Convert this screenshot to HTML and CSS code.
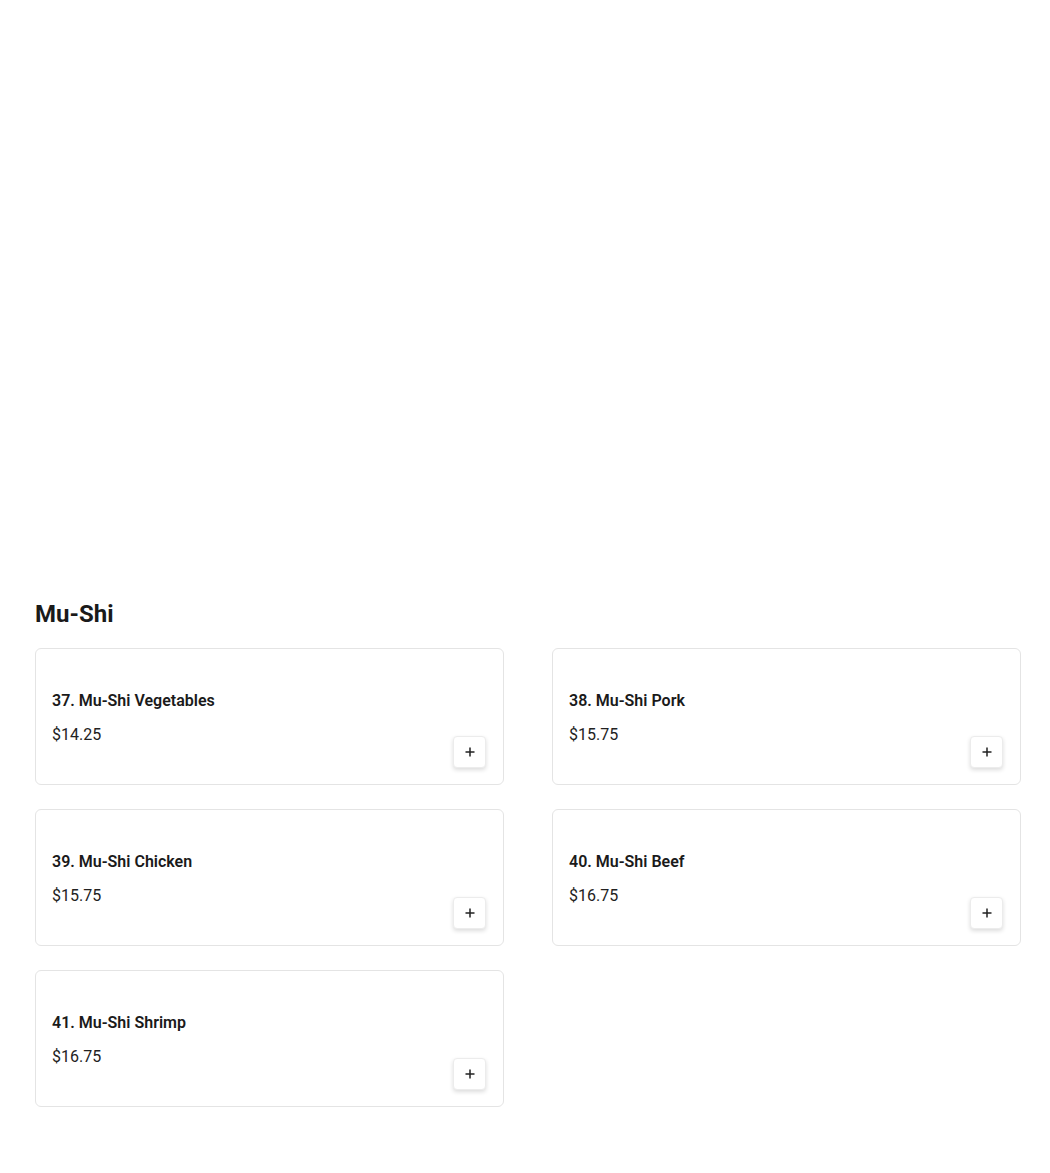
FILE: index.html
```html
<!DOCTYPE html>
<html>
<head>
<meta charset="utf-8">
<link rel="stylesheet" href="styles.css">
</head>
<body>
<main class="page">
  <section class="category">
    <h2 class="category-title">Mu-Shi</h2>
    <div class="grid">
      <div class="card">
        <div class="info">
          <div class="name">37. Mu-Shi Vegetables</div>
          <div class="price">$14.25</div>
        </div>
        <button class="add"><svg width="12" height="12" viewBox="0 0 12 12"><path d="M6 1.5v9M1.5 6h9" stroke="#222" stroke-width="1.5"/></svg></button>
      </div>
      <div class="card">
        <div class="info">
          <div class="name">38. Mu-Shi Pork</div>
          <div class="price">$15.75</div>
        </div>
        <button class="add"><svg width="12" height="12" viewBox="0 0 12 12"><path d="M6 1.5v9M1.5 6h9" stroke="#222" stroke-width="1.5"/></svg></button>
      </div>
      <div class="card">
        <div class="info">
          <div class="name">39. Mu-Shi Chicken</div>
          <div class="price">$15.75</div>
        </div>
        <button class="add"><svg width="12" height="12" viewBox="0 0 12 12"><path d="M6 1.5v9M1.5 6h9" stroke="#222" stroke-width="1.5"/></svg></button>
      </div>
      <div class="card">
        <div class="info">
          <div class="name">40. Mu-Shi Beef</div>
          <div class="price">$16.75</div>
        </div>
        <button class="add"><svg width="12" height="12" viewBox="0 0 12 12"><path d="M6 1.5v9M1.5 6h9" stroke="#222" stroke-width="1.5"/></svg></button>
      </div>
      <div class="card">
        <div class="info">
          <div class="name">41. Mu-Shi Shrimp</div>
          <div class="price">$16.75</div>
        </div>
        <button class="add"><svg width="12" height="12" viewBox="0 0 12 12"><path d="M6 1.5v9M1.5 6h9" stroke="#222" stroke-width="1.5"/></svg></button>
      </div>
    </div>
  </section>
</main>
</body>
</html>
```
FILE: styles.css
```css
html, body {
  margin: 0;
  padding: 0;
  background: #fff;
}
body {
  font-family: Roboto, "Liberation Sans", sans-serif;
  color: #1c1c1c;
}
.page {
  padding: 598px 30px 40px 35px;
}
.category-title {
  margin: 0 0 18px 0;
  font-size: 24px;
  line-height: 32px;
  font-weight: 700;
  color: #1a1a1a;
}
.grid {
  display: grid;
  grid-template-columns: 469px 469px;
  column-gap: 48px;
  row-gap: 24px;
}
.card {
  box-sizing: border-box;
  height: 137px;
  border: 1px solid #e4e4e4;
  border-radius: 6px;
  padding: 16px 17px 16px 16px;
  display: flex;
  justify-content: space-between;
}
.info {
  padding-top: 24px;
}
.name {
  font-size: 16px;
  line-height: 24px;
  font-weight: 600;
  color: #1a1a1a;
}
.price {
  margin-top: 10px;
  font-size: 16px;
  line-height: 24px;
  font-weight: 400;
  color: #222;
}
.add {
  align-self: flex-end;
  box-sizing: border-box;
  width: 33px;
  height: 32px;
  margin-bottom: 0;
  padding: 0;
  border: 1px solid #ececec;
  border-radius: 4px;
  background: #fff;
  box-shadow: 0 2px 4px rgba(0, 0, 0, 0.14);
  display: flex;
  align-items: center;
  justify-content: center;
}
```
